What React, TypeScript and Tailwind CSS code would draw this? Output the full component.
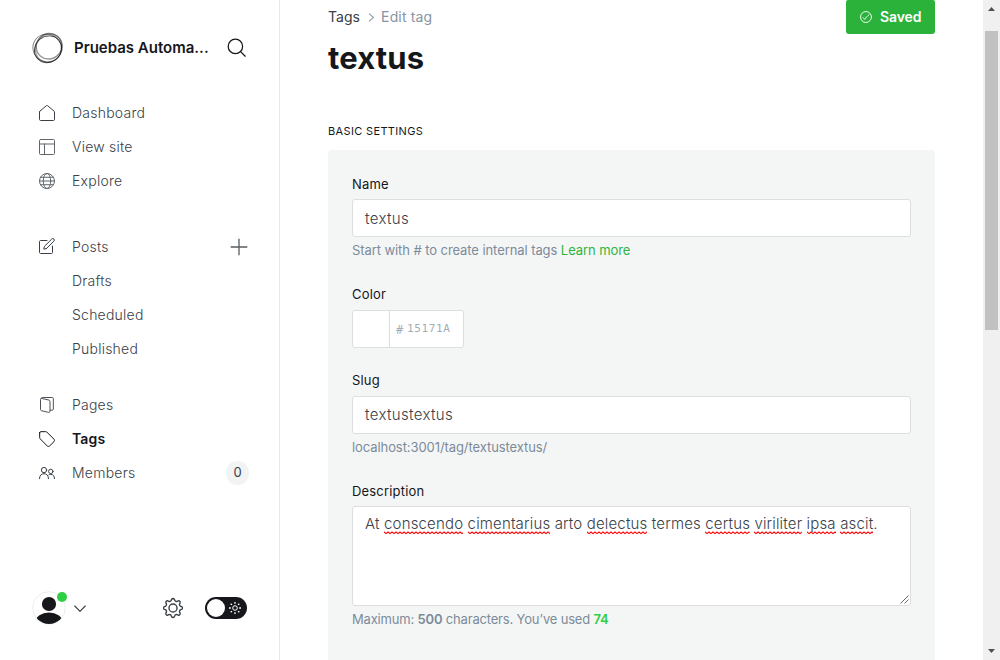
import type { ReactNode } from "react";

function Icon({ children, className = "", size = 16 }: { children: ReactNode; className?: string; size?: number }) {
  return (
    <svg
      width={size}
      height={size}
      viewBox="0 0 24 24"
      fill="none"
      stroke="currentColor"
      strokeWidth={1.5}
      strokeLinecap="round"
      strokeLinejoin="round"
      className={`shrink-0 ${className}`}
    >
      {children}
    </svg>
  );
}

const HouseIcon = () => (
  <Icon>
    <path d="M.75 10.5v11.25c0 .8.7 1.5 1.5 1.5h19.5c.8 0 1.5-.7 1.5-1.5V10.5c0-.6-.25-1-.7-1.35L13 1.1a1.6 1.6 0 0 0-2 0L1.45 9.15c-.45.35-.7.75-.7 1.35z" />
  </Icon>
);
const LayoutIcon = () => (
  <Icon className="opacity-80">
    <rect x=".75" y=".75" width="22.5" height="22.5" rx="1.5" />
    <path d="M.75 7.5h22.5M8.25 7.5v15.75" />
  </Icon>
);
const GlobeIcon = () => (
  <Icon className="opacity-80">
    <circle cx="12" cy="12" r="11.25" />
    <ellipse cx="12" cy="12" rx="5.6" ry="11.25" />
    <path d="M.75 12h22.5M2.3 6.4h19.4M2.3 17.6h19.4" />
  </Icon>
);
const PencilIcon = () => (
  <Icon className="-mt-[2px]">
    <path d="M12 3.75H2.25c-.8 0-1.5.7-1.5 1.5v16.5c0 .8.7 1.5 1.5 1.5h16.5c.8 0 1.5-.7 1.5-1.5V12" />
    <path d="M11.2 15.8l-4 .9.9-4.1L19.2 1.5a2.2 2.2 0 0 1 3.2 0 2.2 2.2 0 0 1 0 3.2L11.2 15.8z" />
  </Icon>
);
const PagesIcon = () => (
  <Icon className="opacity-90">
    <path d="M4 2.2l11 2.4c.8.2 1.5.9 1.5 1.7v15.400c0 1-.8 1.600-1.800 1.400L3.600 20.500c-.7-.2-1.350-.8-1.350-1.500V3.500c0-.9.700-1.500 1.750-1.300z" />
    <path d="M3.200 2.200C3.600 1.300 4.300.75 5.200.75h14.800c.8 0 1.500.7 1.500 1.500v16c0 .8-.6 1.500-1.500 1.500h-3.300" />
  </Icon>
);
const TagIcon = () => (
  <Icon>
    <path d="M1 2.5v7.3c0 .8.3 1.5.9 2.1l10.4 10.5c1 1 2.7 1 3.7 0l6.5-6.5c1-1 1-2.7 0-3.7L12 1.9C11.4 1.3 10.7 1 9.9 1H2.5C1.7 1 1 1.7 1 2.5z" />
  </Icon>
);
const MembersIcon = () => (
  <Icon>
    <circle cx="7.5" cy="7.6" r="4" />
    <path d="M.75 20.5c0-4.7 2.7-7.5 6.75-7.5s6.75 2.8 6.75 7.5" />
    <circle cx="17.7" cy="9.6" r="3.3" />
    <path d="M14.9 14.7c.8-.4 1.7-.6 2.8-.6 3.4 0 5.55 2.4 5.55 6.4" />
  </Icon>
);

function NavItem({ icon, label, active = false, children }: { icon?: ReactNode; label: string; active?: boolean; children?: ReactNode }) {
  return (
    <li className={`flex h-[34px] items-center ${active ? "font-semibold text-[#15171a]" : "font-[350] text-[#394047]"}`}>
      <span className="flex w-[33px] shrink-0">{icon}</span>
      <span className={`flex-1 pb-0.5 ${active ? "tracking-[0.15px]" : "tracking-[0.23px]"}`}>{label}</span>
      {children}
    </li>
  );
}

function Sidebar() {
  return (
    <nav className="flex w-[280px] shrink-0 flex-col border-r border-[#e6e9eb] bg-white text-[14px]">
      <div className="flex h-24 items-center pl-8">
        <svg width="32" height="32" viewBox="0 0 32 32" fill="none" stroke="#15171a" className="shrink-0">
          <ellipse cx="15.2" cy="17" rx="14.2" ry="13" strokeOpacity=".8" strokeWidth=".9" transform="rotate(-40 16 16)" />
          <ellipse cx="18" cy="15.6" rx="13" ry="12.6" strokeOpacity=".45" strokeWidth="1.4" transform="rotate(-50 16 16)" />
          <ellipse cx="15.2" cy="16.4" rx="14.3" ry="13.8" strokeOpacity=".55" strokeWidth=".9" transform="rotate(25 16 16)" />
          <ellipse cx="16.8" cy="15.6" rx="13" ry="14.6" strokeOpacity=".4" strokeWidth="1.3" transform="rotate(32 16 16)" />
        </svg>
        <span className="ml-[10px] w-[143px] whitespace-nowrap text-[15px] font-semibold text-[#15171a]">Pruebas Automa...</span>
        <svg width="20" height="20" viewBox="0 0 20 20" fill="none" stroke="#15171a" strokeWidth="1.25" strokeLinecap="round" className="ml-[10px] shrink-0">
          <circle cx="8.4" cy="8.4" r="7.2" />
          <path d="M13.6 13.6l4.600 4.600" />
        </svg>
      </div>
      <ul className="pl-[39px] pr-[31px]">
        <NavItem icon={<HouseIcon />} label="Dashboard" />
        <NavItem icon={<LayoutIcon />} label="View site" />
        <NavItem icon={<GlobeIcon />} label="Explore" />
      </ul>
      <ul className="mt-8 pl-[39px] pr-[31px]">
        <NavItem icon={<PencilIcon />} label="Posts">
          <svg width="18" height="18" viewBox="0 0 18 18" stroke="#394047" strokeOpacity=".85" strokeWidth="1.3" className="shrink-0">
            <path d="M9 .7v16.6M.7 9h16.6" />
          </svg>
        </NavItem>
        <NavItem label="Drafts" />
        <NavItem label="Scheduled" />
        <NavItem label="Published" />
      </ul>
      <ul className="mt-[22px] pl-[39px] pr-[31px]">
        <NavItem icon={<PagesIcon />} label="Pages" />
        <NavItem icon={<TagIcon />} label="Tags" active />
        <NavItem icon={<MembersIcon />} label="Members">
          <span className="-mr-px flex h-6 w-[23px] items-center justify-center rounded-full bg-[#f1f3f4] text-[13px] font-normal text-[#394047]">0</span>
        </NavItem>
      </ul>
      <div className="mb-[34px] mt-auto flex h-9 items-center pl-8">
        <div className="relative">
          <svg width="34" height="34" viewBox="0 0 34 34" className="block">
            <defs>
              <clipPath id="avatar">
                <circle cx="17" cy="17" r="16" />
              </clipPath>
            </defs>
            <circle cx="17" cy="17" r="16.3" fill="#fff" stroke="#e6e9eb" strokeWidth=".8" />
            <circle cx="17" cy="13" r="7.1" fill="#15171a" />
            <ellipse cx="17" cy="30.5" rx="13.5" ry="9" fill="#15171a" clipPath="url(#avatar)" />
          </svg>
          <span className="absolute right-[-1px] top-px size-[10px] rounded-full bg-[#30cf43]" />
        </div>
        <svg width="12" height="8" viewBox="0 0 12 8" fill="none" stroke="#394047" strokeWidth="1.1" strokeLinecap="round" strokeLinejoin="round" className="ml-2 mt-0.5">
          <path d="M.8 1l5.2 5.4L11.2 1" />
        </svg>
        <svg width="22" height="22" viewBox="0 0 24 24" fill="none" stroke="#394047" strokeWidth="1.5" strokeLinejoin="round" className="ml-[76px]">
          <circle cx="12" cy="12" r="4.4" />
          <path d="M10.55 2.6l-.45 1.05a2 2 0 0 1-2.65 1.1L6.4 4.3a1.6 1.6 0 0 0-2.1 2.1l.45 1.05a2 2 0 0 1-1.1 2.65l-1.05.45a1.6 1.6 0 0 0 0 2.9l1.05.45a2 2 0 0 1 1.1 2.65l-.45 1.05a1.6 1.6 0 0 0 2.1 2.1l1.05-.45a2 2 0 0 1 2.65 1.1l.45 1.05a1.6 1.6 0 0 0 2.9 0l.45-1.05a2 2 0 0 1 2.65-1.1l1.05.45a1.6 1.6 0 0 0 2.1-2.1l-.45-1.05a2 2 0 0 1 1.1-2.65l1.05-.45a1.6 1.6 0 0 0 0-2.9l-1.05-.45a2 2 0 0 1-1.1-2.65l.45-1.05a1.6 1.6 0 0 0-2.1-2.1l-1.05.45a2 2 0 0 1-2.65-1.1l-.45-1.05a1.6 1.6 0 0 0-2.9 0z" />
        </svg>
        <div className="ml-[21px] flex h-[22px] w-[42px] items-center justify-between rounded-full bg-[#15171a] pl-0.5 pr-[6px]">
          <span className="size-[18px] rounded-full bg-white" />
          <svg width="12" height="12" viewBox="0 0 12 12" fill="none" stroke="#fff" strokeWidth="1">
            <circle cx="6" cy="6" r="2.3" />
            <path strokeWidth="1.3" d="M6 0v1.8M6 10.2V12M0 6h1.8M10.2 6H12M1.7 1.7l1.2 1.2M9.1 9.1l1.2 1.2M1.7 10.3l1.2-1.2M9.1 2.9l1.2-1.2" />
          </svg>
        </div>
      </div>
    </nav>
  );
}

function Label({ children, className = "" }: { children: ReactNode; className?: string }) {
  return <label className={`block h-5 text-[13px] font-normal leading-5 tracking-[0.18px] text-[#15171a] ${className}`}>{children}</label>;
}

function Hint({ children, className = "tracking-[-0.08px]" }: { children: ReactNode; className?: string }) {
  return <p className={`mt-[3px] h-5 text-[13px] leading-5 text-[#7c8b9a] ${className}`}>{children}</p>;
}

function Field({ value, className = "" }: { value: string; className?: string }) {
  return (
    <div className={`flex h-[38px] items-center rounded-[3px] border border-[#dddedf] bg-white px-3 text-[15px] font-[350] tracking-[0.35px] text-[#394047] ${className}`}>
      {value}
    </div>
  );
}

function Misspelled({ id, children }: { id: string; children: string }) {
  return (
    <span className="relative">
      {children}
      <svg width="100%" height="4" className="absolute bottom-[-2px] left-0">
        <defs>
          <pattern id={id} width="4" height="4" patternUnits="userSpaceOnUse">
            <path d="M-2 2.4L0 1L2 2.6L4 1L6 2.6" fill="none" stroke="#f00" strokeWidth="1.2" />
          </pattern>
        </defs>
        <rect width="100%" height="4" fill={`url(#${id})`} />
      </svg>
    </span>
  );
}

const sentence: [string, boolean][] = [
  ["At", false],
  ["conscendo", true],
  ["cimentarius", true],
  ["arto", false],
  ["delectus", true],
  ["termes", false],
  ["certus", true],
  ["viriliter", true],
  ["ipsa", true],
  ["ascit", true],
];

function Main() {
  return (
    <main className="flex min-w-0 flex-1 flex-col bg-white px-12">
      <header className="flex h-[34px] shrink-0 items-center justify-between">
        <div className="flex items-center text-[14px]">
          <span className="pb-0.5 tracking-[0.05px] text-[#394047]">Tags</span>
          <svg width="7" height="9" viewBox="0 0 7 9" fill="none" stroke="#8f9ba7" strokeWidth="1.1" className="ml-2 mr-[6px]">
            <path d="M1 .6l4.5 3.9L1 8.4" />
          </svg>
          <span className="pb-0.5 tracking-[0.15px] text-[#8794a2]">Edit tag</span>
        </div>
        <button className="flex h-[34px] w-[89px] items-center rounded-b-[3px] rounded-t-[2px] bg-[#2ab23a] pl-[14px] text-[14px] font-semibold tracking-[-0.1px] text-white">
          <svg width="12" height="12" viewBox="0 0 24 24" fill="none" stroke="#fff" strokeWidth="1.8" strokeLinecap="round" strokeLinejoin="round" className="mr-2">
            <circle cx="12" cy="12" r="11" />
            <path d="M6 13.2l3.7 3.7c2-3.7 4.5-6.7 8.3-9.4" />
          </svg>
          <span className="pb-0.5">Saved</span>
        </button>
      </header>
      <h1 className="mt-1 h-10 shrink-0 text-[31px] font-bold leading-10 tracking-[0.15px] text-[#15171a]">textus</h1>
      <h4 className="mt-[43px] h-5 shrink-0 text-[11px] leading-5 tracking-[0.35px] text-[#15171a]">BASIC SETTINGS</h4>
      <section className="mt-[9px] flex-1 rounded-t-[3px] bg-[#f4f6f6] px-6 pt-6">
        <Label>Name</Label>
        <Field value="textus" className="mt-[5px] pt-0.5" />
        <Hint>
          Start with # to create internal tags <span className="text-[#30b43f]">Learn more</span>
        </Hint>
        <Label className="mt-6">Color</Label>
        <div className="mt-[6px] flex h-[38px] w-28 rounded-[3px] border border-[#dddedf] bg-white">
          <div className="w-[37px] border-r border-[#dddedf]" />
          <div className="flex items-center pl-[6px] font-['DejaVu_Sans_Mono',monospace] text-[11px] text-[#a3adb8]">
            <span className="w-[11px] pt-px text-[12px]">#</span>
            <span className="tracking-[0.65px]">15171A</span>
          </div>
        </div>
        <Label className="mt-[22px]">Slug</Label>
        <Field value="textustextus" className="mt-[6px]" />
        <Hint>localhost:3001/tag/textustextus/</Hint>
        <Label className="mt-6">Description</Label>
        <div className="mt-[5px] flex h-[100px] rounded-[3px] border border-[#dddedf] bg-white pl-3">
          <p className="flex-1 whitespace-nowrap pt-[7px] text-[15px] font-[350] leading-5 tracking-[0.16px] text-[#394047]">
            {sentence.map(([word, wrong], i) => (
              <span key={word}>
                {i > 0 && " "}
                {wrong ? <Misspelled id={`wave-${word}`}>{word}</Misspelled> : word}
              </span>
            ))}
            .
          </p>
          <svg width="9" height="9" viewBox="0 0 9 9" stroke="#555" strokeWidth=".9" className="mb-px mr-px self-end">
            <path d="M.5 8.5l8-8M4.5 8.5l4-4" />
          </svg>
        </div>
        <Hint className="tracking-[-0.18px]">
          Maximum: <b className="font-semibold">500</b> characters. You’ve used <b className="font-semibold text-[#30cf43]">74</b>
        </Hint>
      </section>
    </main>
  );
}

function Scrollbar() {
  return (
    <div className="flex w-[17px] shrink-0 flex-col items-center bg-[#f0f0f0]">
      <svg width="7" height="4" viewBox="0 0 7 4" className="mt-[7px]">
        <path d="M0 4L3.5 0L7 4z" fill="#505050" />
      </svg>
      <div className="mt-5 h-[299px] w-[13px] bg-[#c1c1c1]" />
      <svg width="7" height="4" viewBox="0 0 7 4" className="mb-[7px] mt-auto">
        <path d="M0 0L3.5 4L7 0z" fill="#505050" />
      </svg>
    </div>
  );
}

export default function App() {
  return (
    <div className="flex h-[660px] w-[1000px] overflow-hidden bg-white font-[Inter,sans-serif]">
      <Sidebar />
      <Main />
      <Scrollbar />
    </div>
  );
}
